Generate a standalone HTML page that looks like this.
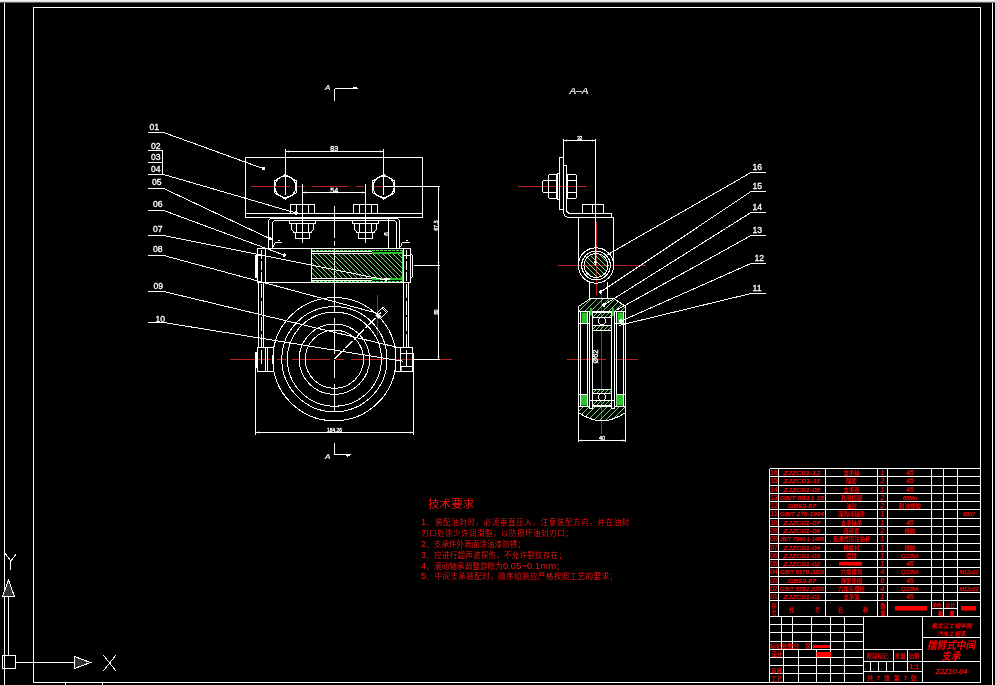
<!DOCTYPE html>
<html lang="zh"><head><meta charset="utf-8"><title>摆臂式中间支承</title>
<style>
html,body{margin:0;padding:0;background:#000;overflow:hidden}
svg{display:block;will-change:transform;font-family:"Liberation Sans","Noto Sans CJK SC",sans-serif}
.w,.wc{stroke:#fff;stroke-width:1;fill:none}
.w,.r,.wc,.rc,.gc{shape-rendering:crispEdges}
.r,.rc{stroke:#b92121;stroke-width:1;fill:none}
.g{stroke:#7cf07c;stroke-width:.9;fill:none}
.gc{stroke:#5fe05f;stroke-width:1;fill:none}
.gf{fill:#2cc42c;stroke:none}
.rf{fill:#f00;stroke:none}
.tw{fill:#fff;font-size:8px;stroke:#fff;stroke-width:.3px}
.twi{fill:#fff;font-style:italic;stroke:#fff;stroke-width:.2px}
.tr{fill:#f20c0c;stroke:#f00;stroke-width:.2px}
.tn{fill:#ff1212;font-weight:350}
.tri{fill:#f20c0c;font-style:italic;stroke:#f00;stroke-width:.25px}
.trb{fill:#f00;font-weight:bold}
.trbi{fill:#f00;font-weight:bold;font-style:italic}
</style></head><body>
<svg width="995" height="685" viewBox="0 0 995 685">
<rect x="0" y="0" width="995" height="685" style="fill:#000"/>
<line class="rc" x1="251" y1="186.5" x2="290" y2="186.5"/>
<line class="rc" x1="296" y1="186.5" x2="305" y2="186.5"/>
<line class="rc" x1="311.5" y1="186.5" x2="348" y2="186.5"/>
<line class="rc" x1="356" y1="186.5" x2="363.6" y2="186.5"/>
<line class="rc" x1="371" y1="186.5" x2="383" y2="186.5"/>
<line class="rc" x1="230" y1="359.5" x2="271" y2="359.5"/>
<line class="rc" x1="277" y1="359.5" x2="286.3" y2="359.5"/>
<line class="rc" x1="292" y1="359.5" x2="330" y2="359.5"/>
<line class="rc" x1="336" y1="359.5" x2="344" y2="359.5"/>
<line class="rc" x1="351.3" y1="359.5" x2="384" y2="359.5"/>
<line class="rc" x1="389" y1="359.5" x2="413" y2="359.5"/>
<line class="rc" x1="439" y1="359.5" x2="452" y2="359.5"/>
<line class="rc" x1="377.5" y1="294.5" x2="377.5" y2="334.5"/>
<line class="rc" x1="517.5" y1="186.5" x2="587" y2="186.5"/>
<line class="rc" x1="557.5" y1="265.5" x2="646" y2="265.5"/>
<line class="rc" x1="596.5" y1="221.5" x2="596.5" y2="295"/>
<line class="rc" x1="601.5" y1="292" x2="601.5" y2="434"/>
<line class="rc" x1="566.5" y1="359.5" x2="590.5" y2="359.5"/>
<line class="rc" x1="595" y1="359.5" x2="605.5" y2="359.5"/>
<line class="rc" x1="613.5" y1="359.5" x2="638" y2="359.5"/>
<rect x="0" y="0" width="995" height="1" fill="#f4f4f4"/>
<rect x="0" y="1" width="995" height="1" fill="#d8d8d8"/>
<rect x="0" y="2" width="995" height="1" fill="#666"/>
<line class="wc" x1="4.5" y1="3" x2="4.5" y2="685"/>
<line class="wc" x1="992.5" y1="3" x2="992.5" y2="685"/>
<rect class="wc" x="33.5" y="7.5" width="947" height="675"/>
<rect class="wc" x="2.5" y="655.5" width="13" height="13"/>
<line class="wc" x1="8.5" y1="597" x2="8.5" y2="655.5"/>
<line class="wc" x1="15.5" y1="662.5" x2="75" y2="662.5"/>
<polygon class="w" points="8.5,580 2.5,596.5 14.5,596.5" style="fill:#333"/>
<polygon class="w" points="90.5,662.5 74.5,656.5 74.5,668.5" style="fill:#333"/>
<line class="w" x1="5.3" y1="553.5" x2="10.8" y2="561"/>
<line class="w" x1="16.4" y1="553.5" x2="10.8" y2="561"/>
<line class="w" x1="10.8" y1="561" x2="10.8" y2="569.5"/>
<line class="w" x1="103.6" y1="655.4" x2="115.7" y2="670.6"/>
<line class="w" x1="115.7" y1="655.4" x2="103.6" y2="670.6"/>
<line class="wc" x1="65.5" y1="683" x2="65.5" y2="685"/>
<line class="wc" x1="102.5" y1="683" x2="102.5" y2="685"/>
<rect class="wc" x="245.5" y="157.5" width="177" height="60"/>
<line class="wc" x1="245.5" y1="213.5" x2="422.5" y2="213.5"/>
<polygon class="w" points="285.4,199.1 274.748,192.95 274.748,180.65 285.4,174.5 296.052,180.65 296.052,192.95"/>
<circle class="w" cx="285.4" cy="186.8" r="10.6"/>
<polygon class="w" points="383.6,199.1 372.948,192.95 372.948,180.65 383.6,174.5 394.252,180.65 394.252,192.95"/>
<circle class="w" cx="383.6" cy="186.8" r="10.6"/>
<line class="wc" x1="285.5" y1="151.5" x2="383.5" y2="151.5"/>
<line class="wc" x1="285.5" y1="149" x2="285.5" y2="195"/>
<line class="wc" x1="383.5" y1="149" x2="383.5" y2="195"/>
<text class="tw" x="334.2" y="150.8" style="font-size:7px" text-anchor="middle">83</text>
<line class="wc" x1="302.5" y1="192.5" x2="365.5" y2="192.5"/>
<line class="wc" x1="302.5" y1="184" x2="302.5" y2="242.5"/>
<line class="wc" x1="365.5" y1="184" x2="365.5" y2="242.5"/>
<text class="tw" x="334.2" y="192.6" style="font-size:7px" text-anchor="middle">54</text>
<rect class="wc" x="290.8" y="204.5" width="23.4" height="9"/>
<line class="wc" x1="296.5" y1="204.5" x2="296.5" y2="213.5"/>
<line class="wc" x1="308.5" y1="204.5" x2="308.5" y2="213.5"/>
<rect class="wc" x="289.5" y="220.5" width="26" height="3"/>
<path class="w" d="M291.5,223.5 V229.5 L294.0,232.5 H311.0 L313.5,229.5 V223.5"/>
<line class="wc" x1="296.5" y1="223.5" x2="296.5" y2="232.5"/>
<line class="wc" x1="308.5" y1="223.5" x2="308.5" y2="232.5"/>
<rect class="wc" x="295.5" y="232.5" width="14" height="6"/>
<rect class="wc" x="353.8" y="204.5" width="23.4" height="9"/>
<line class="wc" x1="359.5" y1="204.5" x2="359.5" y2="213.5"/>
<line class="wc" x1="371.5" y1="204.5" x2="371.5" y2="213.5"/>
<rect class="wc" x="352.5" y="220.5" width="26" height="3"/>
<path class="w" d="M354.5,223.5 V229.5 L357.0,232.5 H374.0 L376.5,229.5 V223.5"/>
<line class="wc" x1="359.5" y1="223.5" x2="359.5" y2="232.5"/>
<line class="wc" x1="371.5" y1="223.5" x2="371.5" y2="232.5"/>
<rect class="wc" x="358.5" y="232.5" width="14" height="6"/>
<path class="w" d="M268.5,247.5 V222 Q268.5,218.5 272,218.5 H396 Q399.5,218.5 399.5,222 V247.5"/>
<path class="w" d="M272.5,247.5 V224 Q272.5,220.5 276,220.5 H393 Q396.5,220.5 396.5,224 V247.5"/>
<line class="wc" x1="388.5" y1="219" x2="388.5" y2="247.5"/>
<text class="tw" x="386.5" y="236" style="font-size:6.5px" text-anchor="middle" transform="rotate(-90 386.5 234)">6</text>
<polyline class="w" points="273,247 275.5,242 281.5,242"/>
<polyline class="w" points="400.5,247 402.5,242 409.5,242"/>
<line class="wc" x1="277.5" y1="240.5" x2="280" y2="240.5"/>
<line class="wc" x1="405.5" y1="240.5" x2="408" y2="240.5"/>
<line class="wc" x1="334.5" y1="206" x2="334.5" y2="238"/>
<line class="wc" x1="334.5" y1="241" x2="334.5" y2="246"/>
<line class="wc" x1="334.5" y1="249" x2="334.5" y2="312"/>
<line class="wc" x1="334.5" y1="318" x2="334.5" y2="354"/>
<line class="wc" x1="334.5" y1="360" x2="334.5" y2="378"/>
<line class="wc" x1="334.5" y1="384" x2="334.5" y2="411.5"/>
<rect class="wc" x="257.5" y="248.5" width="153" height="34"/>
<path class="w" d="M257.5,254.5 Q255.5,254.5 255.5,257 V275 Q255.5,277.5 257.5,277.5"/>
<path class="w" d="M410.5,254.5 Q412.5,254.5 412.5,257 V275 Q412.5,277.5 410.5,277.5"/>
<line class="wc" x1="265.5" y1="248.5" x2="265.5" y2="282.5"/>
<line class="wc" x1="257.5" y1="255.5" x2="265.5" y2="255.5"/>
<line class="wc" x1="403.5" y1="248.5" x2="403.5" y2="282.5"/>
<line class="wc" x1="403.5" y1="255.5" x2="410.5" y2="255.5"/>
<line class="wc" x1="261.5" y1="250" x2="261.5" y2="281" stroke-dasharray="9 2"/>
<line class="wc" x1="406.5" y1="250" x2="406.5" y2="281" stroke-dasharray="9 2"/>
<clipPath id="hc"><rect x="312" y="253.5" width="90.5" height="24.5"/></clipPath>
<g clip-path="url(#hc)">
<line class="g" x1="287" y1="253" x2="313" y2="279"/>
<line class="g" x1="292" y1="253" x2="318" y2="279"/>
<line class="g" x1="297" y1="253" x2="323" y2="279"/>
<line class="g" x1="302" y1="253" x2="328" y2="279"/>
<line class="g" x1="307" y1="253" x2="333" y2="279"/>
<line class="g" x1="312" y1="253" x2="338" y2="279"/>
<line class="g" x1="317" y1="253" x2="343" y2="279"/>
<line class="g" x1="322" y1="253" x2="348" y2="279"/>
<line class="g" x1="327" y1="253" x2="353" y2="279"/>
<line class="g" x1="332" y1="253" x2="358" y2="279"/>
<line class="g" x1="337" y1="253" x2="363" y2="279"/>
<line class="g" x1="342" y1="253" x2="368" y2="279"/>
<line class="g" x1="347" y1="253" x2="373" y2="279"/>
<line class="g" x1="352" y1="253" x2="378" y2="279"/>
<line class="g" x1="357" y1="253" x2="383" y2="279"/>
<line class="g" x1="362" y1="253" x2="388" y2="279"/>
<line class="g" x1="367" y1="253" x2="393" y2="279"/>
<line class="g" x1="372" y1="253" x2="398" y2="279"/>
<line class="g" x1="377" y1="253" x2="403" y2="279"/>
<line class="g" x1="382" y1="253" x2="408" y2="279"/>
<line class="g" x1="387" y1="253" x2="413" y2="279"/>
<line class="g" x1="392" y1="253" x2="418" y2="279"/>
<line class="g" x1="397" y1="253" x2="423" y2="279"/>
<line class="g" x1="402" y1="253" x2="428" y2="279"/>
<line class="g" x1="407" y1="253" x2="433" y2="279"/>
<line class="g" x1="412" y1="253" x2="438" y2="279"/>
<line class="g" x1="417" y1="253" x2="443" y2="279"/>
</g>
<line class="gc" x1="312" y1="250.5" x2="402.5" y2="250.5" stroke-dasharray="2.5 1.5"/>
<line class="gc" x1="312" y1="281.5" x2="402.5" y2="281.5" stroke-dasharray="2.5 1.5"/>
<line class="wc" x1="312" y1="251.5" x2="372" y2="251.5"/>
<line class="wc" x1="312" y1="253.5" x2="372" y2="253.5"/>
<line class="wc" x1="312" y1="278.5" x2="372" y2="278.5"/>
<line class="wc" x1="312" y1="280.5" x2="372" y2="280.5"/>
<rect class="gf" x="372" y="252" width="30.5" height="2"/>
<rect class="gf" x="372" y="278" width="30.5" height="2"/>
<rect class="w" x="384" y="278" width="5.5" height="2" style="fill:#fff;stroke:none"/>
<line class="wc" x1="311.5" y1="248.5" x2="311.5" y2="282.5"/>
<line class="gc" x1="402.5" y1="251" x2="402.5" y2="281"/>
<line class="wc" x1="258.5" y1="282.5" x2="258.5" y2="347.5"/>
<line class="wc" x1="263.5" y1="282.5" x2="263.5" y2="347.5"/>
<line class="wc" x1="403.5" y1="282.5" x2="403.5" y2="347.5"/>
<line class="wc" x1="408.5" y1="282.5" x2="408.5" y2="347.5"/>
<line class="wc" x1="261.5" y1="284" x2="261.5" y2="366" stroke-dasharray="14 2.5"/>
<line class="wc" x1="406.5" y1="284" x2="406.5" y2="366" stroke-dasharray="14 2.5"/>
<rect class="wc" x="257.5" y="347.5" width="16" height="24"/>
<line class="wc" x1="265.5" y1="347.5" x2="265.5" y2="371.5"/>
<line class="wc" x1="267.5" y1="347.5" x2="267.5" y2="371.5"/>
<rect class="w" x="255.5" y="352" width="2" height="15" style="fill:#fff"/>
<rect class="w" x="255" y="255" width="2.5" height="22.5" style="fill:#fff;stroke:none"/>
<rect class="wc" x="395.5" y="347.5" width="17" height="24"/>
<line class="wc" x1="400.5" y1="347.5" x2="400.5" y2="371.5"/>
<line class="wc" x1="400.5" y1="353.5" x2="412.5" y2="353.5"/>
<line class="wc" x1="406.5" y1="353.5" x2="406.5" y2="366.5"/>
<line class="wc" x1="400.5" y1="366.5" x2="412.5" y2="366.5"/>
<line class="gc" x1="401.5" y1="366.5" x2="401.5" y2="371"/>
<circle class="w" cx="334.4" cy="359.2" r="61.6"/>
<circle class="w" cx="334.4" cy="359.2" r="52.6"/>
<circle class="w" cx="334.4" cy="359.2" r="47"/>
<circle class="w" cx="334.4" cy="359.2" r="35.2"/>
<circle class="w" cx="334.4" cy="359.2" r="29.1"/>
<line class="w" x1="334.4" y1="359.2" x2="381" y2="312.6" stroke-dasharray="10 2 2 2"/>
<g transform="translate(382 312.3) rotate(-45)"><rect class="w" x="-4.2" y="-3.3" width="8.4" height="6.6"/><line class="w" x1="2.6" y1="-3.3" x2="2.6" y2="3.3"/><rect x="-7" y="-2.6" width="3.6" height="5.2" style="fill:#fff"/></g>
<line class="wc" x1="255.5" y1="432.5" x2="413.5" y2="432.5"/>
<line class="wc" x1="255.5" y1="367" x2="255.5" y2="435"/>
<line class="wc" x1="413.5" y1="353" x2="413.5" y2="435"/>
<text class="tw" x="334.5" y="432" style="font-size:5.5px" text-anchor="middle" textLength="15" lengthAdjust="spacingAndGlyphs">184.26</text>
<line class="wc" x1="438.5" y1="186.5" x2="438.5" y2="359.5"/>
<line class="wc" x1="383.5" y1="186.5" x2="440" y2="186.5"/>
<line class="wc" x1="413.5" y1="265.5" x2="440" y2="265.5"/>
<line class="wc" x1="412.5" y1="359.5" x2="439.5" y2="359.5"/>
<text class="tw" x="438" y="226" style="font-size:5.2px" text-anchor="middle" transform="rotate(-90 437.5 226)">67.5</text>
<text class="tw" x="438" y="312.5" style="font-size:4.6px" text-anchor="middle" transform="rotate(-90 437.5 312.5)">80</text>
<line class="wc" x1="334.5" y1="88.5" x2="334.5" y2="101"/>
<line class="wc" x1="334.5" y1="88.5" x2="358" y2="88.5"/>
<polyline class="w" points="352,88.5 355,87 358,88.5"/>
<text class="twi" x="325" y="90.3" style="font-size:8px">A</text>
<line class="wc" x1="334.5" y1="443" x2="334.5" y2="454.5"/>
<line class="wc" x1="334.5" y1="454.5" x2="350.5" y2="454.5"/>
<polyline class="w" points="345,454.5 347.5,456 350.5,454.5"/>
<text class="twi" x="325" y="459.3" style="font-size:8px">A</text>
<text class="tw" x="149.4" y="129.6" style="font-size:8.6px">01</text>
<line class="wc" x1="148" y1="132.5" x2="163.7" y2="132.5"/>
<line class="w" x1="163.7" y1="132.5" x2="263.8" y2="168.8"/>
<circle class="w" cx="263.8" cy="168.8" r="1.3" style="fill:#fff"/>
<text class="tw" x="151" y="148.6" style="font-size:8.6px">02</text>
<line class="wc" x1="148" y1="150.5" x2="162.5" y2="150.5"/>
<text class="tw" x="151" y="160.2" style="font-size:8.6px">03</text>
<line class="wc" x1="148" y1="162.5" x2="162.5" y2="162.5"/>
<text class="tw" x="151" y="171.9" style="font-size:8.6px">04</text>
<line class="wc" x1="147.5" y1="174.5" x2="163.7" y2="174.5"/>
<line class="w" x1="163.7" y1="174.5" x2="296" y2="213"/>
<circle class="w" cx="296" cy="213" r="1.3" style="fill:#fff"/>
<text class="tw" x="152" y="184.8" style="font-size:8.6px">05</text>
<line class="wc" x1="148" y1="188.5" x2="163.7" y2="188.5"/>
<line class="w" x1="163.7" y1="188.5" x2="270" y2="238.7"/>
<circle class="w" cx="270" cy="238.7" r="1.3" style="fill:#fff"/>
<text class="tw" x="153" y="206.6" style="font-size:8.6px">06</text>
<line class="wc" x1="148" y1="210.5" x2="163.7" y2="210.5"/>
<line class="w" x1="163.7" y1="210.5" x2="284.2" y2="255.1"/>
<circle class="w" cx="284.2" cy="255.1" r="1.3" style="fill:#fff"/>
<text class="tw" x="152.9" y="232.2" style="font-size:8.6px">07</text>
<line class="wc" x1="148" y1="235.5" x2="163.7" y2="235.5"/>
<line class="w" x1="163.7" y1="235.5" x2="387" y2="280.3"/>
<text class="tw" x="152.9" y="251.7" style="font-size:8.6px">08</text>
<line class="wc" x1="148" y1="255.5" x2="163.7" y2="255.5"/>
<line class="w" x1="163.7" y1="255.5" x2="377" y2="313.2"/>
<text class="tw" x="153.5" y="289.2" style="font-size:8.6px">09</text>
<line class="wc" x1="148" y1="291.5" x2="163.7" y2="291.5"/>
<line class="w" x1="163.7" y1="291.5" x2="400" y2="348"/>
<text class="tw" x="155.5" y="322.2" style="font-size:8.6px">10</text>
<line class="wc" x1="148" y1="322.5" x2="163.7" y2="322.5"/>
<line class="w" x1="163.7" y1="322.5" x2="403.4" y2="361.3"/>
<line class="wc" x1="162.5" y1="150.5" x2="162.5" y2="174.5"/>
<text class="twi" x="569.5" y="94.3" style="font-size:9.6px" textLength="18.8" lengthAdjust="spacingAndGlyphs">A–A</text>
<line class="wc" x1="563.5" y1="140.5" x2="595.5" y2="140.5"/>
<line class="wc" x1="563.5" y1="138.5" x2="563.5" y2="165"/>
<line class="wc" x1="595.5" y1="138.5" x2="595.5" y2="265"/>
<text class="tw" x="579.7" y="140" style="font-size:4.5px" text-anchor="middle">32</text>
<circle class="w" cx="595.5" cy="262" r="1.3" style="fill:#fff"/>
<path class="w" d="M559.5,173.5 V157.5 H563.5 M559.5,199.5 V209.5 H563.5"/>
<path class="w" d="M563.5,165 V211 Q563.5,217.5 570,217.5 H613.5"/>
<path class="w" d="M563.5,165.5 H566.5 V209 Q566.5,213.5 571,213.5 H611.5 V217.5"/>
<path class="w" d="M548.5,180 H545 Q542.5,180 542.5,182.5 V190 Q542.5,192.5 545,192.5 H548.5"/>
<path class="w" d="M550.5,174.5 H556.5 V198.5 H550.5 Q548.5,198.5 548.5,196.5 V176.5 Q548.5,174.5 550.5,174.5 Z"/>
<line class="wc" x1="548.5" y1="180.5" x2="556.5" y2="180.5"/>
<line class="wc" x1="548.5" y1="192.5" x2="556.5" y2="192.5"/>
<rect class="wc" x="557.5" y="173.5" width="2" height="26"/>
<path class="w" d="M567.5,174.5 H574.5 Q576.5,174.5 576.5,176.5 V196.5 Q576.5,198.5 574.5,198.5 H567.5 Z"/>
<line class="wc" x1="567.5" y1="180.5" x2="576.5" y2="180.5"/>
<line class="wc" x1="567.5" y1="192.5" x2="576.5" y2="192.5"/>
<rect class="wc" x="582.5" y="204.5" width="21" height="9"/>
<line class="wc" x1="592.5" y1="204.5" x2="592.5" y2="213.5"/>
<line class="wc" x1="578.5" y1="217.5" x2="578.5" y2="265.5"/>
<line class="wc" x1="613.5" y1="217.5" x2="613.5" y2="265.5"/>
<circle class="w" cx="596" cy="265.5" r="17.7"/>
<circle class="w" cx="596" cy="265.5" r="14.3"/>
<circle class="w" cx="596" cy="265.5" r="12"/>
<clipPath id="hc2"><circle cx="596" cy="265.5" r="11.5"/></clipPath><g clip-path="url(#hc2)">
<line class="g" x1="560" y1="250" x2="592" y2="282"/>
<line class="g" x1="565" y1="250" x2="597" y2="282"/>
<line class="g" x1="570" y1="250" x2="602" y2="282"/>
<line class="g" x1="575" y1="250" x2="607" y2="282"/>
<line class="g" x1="580" y1="250" x2="612" y2="282"/>
<line class="g" x1="585" y1="250" x2="617" y2="282"/>
<line class="g" x1="590" y1="250" x2="622" y2="282"/>
<line class="g" x1="595" y1="250" x2="627" y2="282"/>
<line class="g" x1="600" y1="250" x2="632" y2="282"/>
<line class="g" x1="605" y1="250" x2="637" y2="282"/>
<line class="g" x1="610" y1="250" x2="642" y2="282"/>
<line class="g" x1="615" y1="250" x2="647" y2="282"/>
</g>
<path class="w" d="M589.5,281.5 V298.5 M607.5,281.5 V298.5"/>
<clipPath id="hc3"><polygon points="590.5,298.5 614,298.5 625.5,306.5 625.5,311.5 578.5,311.5 578.5,306.5"/></clipPath><g clip-path="url(#hc3)">
<line class="g" x1="560" y1="312" x2="574" y2="298"/>
<line class="g" x1="566" y1="312" x2="580" y2="298"/>
<line class="g" x1="572" y1="312" x2="586" y2="298"/>
<line class="g" x1="578" y1="312" x2="592" y2="298"/>
<line class="g" x1="584" y1="312" x2="598" y2="298"/>
<line class="g" x1="590" y1="312" x2="604" y2="298"/>
<line class="g" x1="596" y1="312" x2="610" y2="298"/>
<line class="g" x1="602" y1="312" x2="616" y2="298"/>
<line class="g" x1="608" y1="312" x2="622" y2="298"/>
<line class="g" x1="614" y1="312" x2="628" y2="298"/>
<line class="g" x1="620" y1="312" x2="634" y2="298"/>
<line class="g" x1="626" y1="312" x2="640" y2="298"/>
<line class="g" x1="632" y1="312" x2="646" y2="298"/>
<line class="g" x1="638" y1="312" x2="652" y2="298"/>
</g>
<polyline class="w" points="578.5,441.5 578.5,306.5 590.5,298.5 614,298.5 625.5,306.5 625.5,441.5"/>
<line class="wc" x1="578.5" y1="311.5" x2="625.5" y2="311.5"/>
<line class="wc" x1="580.5" y1="311.5" x2="580.5" y2="406"/>
<line class="wc" x1="587.5" y1="311.5" x2="587.5" y2="406"/>
<line class="wc" x1="589.5" y1="311.5" x2="589.5" y2="406"/>
<line class="wc" x1="592.5" y1="311.5" x2="592.5" y2="406"/>
<line class="wc" x1="611.5" y1="311.5" x2="611.5" y2="406"/>
<line class="wc" x1="614.5" y1="311.5" x2="614.5" y2="406"/>
<line class="wc" x1="616.5" y1="311.5" x2="616.5" y2="406"/>
<line class="wc" x1="623.5" y1="311.5" x2="623.5" y2="406"/>
<rect class="gf" x="581.5" y="312.5" width="5.5" height="11"/>
<rect class="gf" x="617.5" y="312.5" width="5.5" height="11"/>
<rect class="gf" x="590" y="308" width="2" height="7.5"/>
<rect class="gf" x="612" y="308" width="2" height="8"/>
<rect class="wc" x="592.5" y="312.5" width="19" height="17.5"/>
<clipPath id="hc4"><rect x="592.5" y="312.5" width="19" height="17.5"/></clipPath><g clip-path="url(#hc4)">
<line class="g" x1="580" y1="330" x2="598" y2="312"/>
<line class="g" x1="584" y1="330" x2="602" y2="312"/>
<line class="g" x1="588" y1="330" x2="606" y2="312"/>
<line class="g" x1="592" y1="330" x2="610" y2="312"/>
<line class="g" x1="596" y1="330" x2="614" y2="312"/>
<line class="g" x1="600" y1="330" x2="618" y2="312"/>
<line class="g" x1="604" y1="330" x2="622" y2="312"/>
<line class="g" x1="608" y1="330" x2="626" y2="312"/>
<line class="g" x1="612" y1="330" x2="630" y2="312"/>
<line class="g" x1="616" y1="330" x2="634" y2="312"/>
</g>
<rect class="w" x="592.5" y="317.5" width="19" height="7.5" style="fill:#000"/>
<circle class="w" cx="602" cy="321.2" r="3.7" style="fill:#000"/>
<line class="wc" x1="614.5" y1="323.5" x2="625.5" y2="323.5"/>
<line class="wc" x1="578.5" y1="323.5" x2="589.5" y2="323.5"/>
<rect class="wc" x="592.5" y="389" width="19" height="16.5"/>
<clipPath id="hc5"><rect x="592.5" y="389" width="19" height="16.5"/></clipPath><g clip-path="url(#hc5)">
<line class="g" x1="580" y1="406" x2="598" y2="388"/>
<line class="g" x1="584" y1="406" x2="602" y2="388"/>
<line class="g" x1="588" y1="406" x2="606" y2="388"/>
<line class="g" x1="592" y1="406" x2="610" y2="388"/>
<line class="g" x1="596" y1="406" x2="614" y2="388"/>
<line class="g" x1="600" y1="406" x2="618" y2="388"/>
<line class="g" x1="604" y1="406" x2="622" y2="388"/>
<line class="g" x1="608" y1="406" x2="626" y2="388"/>
<line class="g" x1="612" y1="406" x2="630" y2="388"/>
<line class="g" x1="616" y1="406" x2="634" y2="388"/>
</g>
<rect class="w" x="592.5" y="393.5" width="19" height="7" style="fill:#000"/>
<circle class="w" cx="602" cy="397" r="3.5" style="fill:#000"/>
<rect class="gf" x="581" y="394.5" width="6" height="11"/>
<rect class="gf" x="616.5" y="394.5" width="6.5" height="11"/>
<line class="wc" x1="578.5" y1="394.5" x2="587.5" y2="394.5"/>
<line class="wc" x1="616.5" y1="394.5" x2="625.5" y2="394.5"/>
<clipPath id="hc6"><path d="M578.5,406 H625.5 V412.5 Q602,429 578.5,412.5 Z"/></clipPath><g clip-path="url(#hc6)">
<line class="g" x1="560" y1="424" x2="578" y2="406"/>
<line class="g" x1="566" y1="424" x2="584" y2="406"/>
<line class="g" x1="572" y1="424" x2="590" y2="406"/>
<line class="g" x1="578" y1="424" x2="596" y2="406"/>
<line class="g" x1="584" y1="424" x2="602" y2="406"/>
<line class="g" x1="590" y1="424" x2="608" y2="406"/>
<line class="g" x1="596" y1="424" x2="614" y2="406"/>
<line class="g" x1="602" y1="424" x2="620" y2="406"/>
<line class="g" x1="608" y1="424" x2="626" y2="406"/>
<line class="g" x1="614" y1="424" x2="632" y2="406"/>
<line class="g" x1="620" y1="424" x2="638" y2="406"/>
<line class="g" x1="626" y1="424" x2="644" y2="406"/>
<line class="g" x1="632" y1="424" x2="650" y2="406"/>
<line class="g" x1="638" y1="424" x2="656" y2="406"/>
</g>
<path class="w" d="M578.5,406 H625.5 M578.5,412.5 Q602,429 625.5,412.5"/>
<rect class="w" x="589.5" y="400" width="2.5" height="8" style="fill:#000"/>
<rect class="w" x="611.5" y="400" width="2.5" height="8" style="fill:#000"/>
<text class="tw" x="599.5" y="358" style="font-size:7.4px" text-anchor="middle" transform="rotate(-90 598 358)">Ø62</text>
<line class="wc" x1="578.5" y1="440.5" x2="625.5" y2="440.5"/>
<text class="tw" x="602" y="439.8" style="font-size:5.6px" text-anchor="middle">40</text>
<text class="tw" x="752.5" y="170.1" style="font-size:8.6px">16</text>
<line class="wc" x1="751" y1="172.5" x2="766" y2="172.5"/>
<line class="w" x1="751" y1="172.5" x2="604.3" y2="256.5"/>
<text class="tw" x="752.5" y="189.1" style="font-size:8.6px">15</text>
<line class="wc" x1="751" y1="191.5" x2="766" y2="191.5"/>
<line class="w" x1="751" y1="191.5" x2="600.6" y2="292"/>
<circle class="w" cx="600.6" cy="292" r="1.3" style="fill:#fff"/>
<text class="tw" x="752.5" y="210.1" style="font-size:8.6px">14</text>
<line class="wc" x1="751" y1="212.5" x2="766" y2="212.5"/>
<line class="w" x1="751" y1="212.5" x2="603.8" y2="305"/>
<circle class="w" cx="603.8" cy="305" r="1.3" style="fill:#fff"/>
<text class="tw" x="752.5" y="233.1" style="font-size:8.6px">13</text>
<line class="wc" x1="751" y1="235.5" x2="766" y2="235.5"/>
<line class="w" x1="751" y1="235.5" x2="616.6" y2="310.1"/>
<text class="tw" x="754.5" y="261.1" style="font-size:8.6px">12</text>
<line class="wc" x1="751" y1="263.5" x2="766" y2="263.5"/>
<line class="w" x1="751" y1="263.5" x2="621" y2="321.1"/>
<circle class="w" cx="621" cy="321.1" r="1.3" style="fill:#fff"/>
<text class="tw" x="752.5" y="291.1" style="font-size:8.6px">11</text>
<line class="wc" x1="751" y1="293.5" x2="766" y2="293.5"/>
<line class="w" x1="751" y1="293.5" x2="618.8" y2="325.5"/>
<text class="tn" x="428" y="508" style="font-size:11.6px" font-weight="400">技术要求</text>
<text class="tn" x="421" y="525.3" style="font-size:7.6px" textLength="208.4" lengthAdjust="spacing"><tspan style="font-size:9.4px">1</tspan>、装配油封时，必须垂直压入，注意装配方向，并在油封</text>
<text class="tn" x="421" y="536.12" style="font-size:7.6px" textLength="151.5" lengthAdjust="spacing">刃口处涂少许润滑脂，以防损坏油封刃口；</text>
<text class="tn" x="421" y="546.94" style="font-size:7.6px" textLength="104" lengthAdjust="spacing"><tspan style="font-size:9.4px">2</tspan>、支承件外表面涂油漆防锈；</text>
<text class="tn" x="421" y="557.76" style="font-size:7.6px" textLength="145" lengthAdjust="spacing"><tspan style="font-size:9.4px">3</tspan>、应进行超声波探伤，不允许裂纹存在；</text>
<text class="tn" x="421" y="568.58" style="font-size:7.6px" textLength="142.6" lengthAdjust="spacing"><tspan style="font-size:9.4px">4</tspan>、滚动轴承调整游隙为<tspan style="font-size:9.4px">0.05~0.1mm</tspan>；</text>
<text class="tn" x="421" y="579.4" style="font-size:7.6px" textLength="196" lengthAdjust="spacing"><tspan style="font-size:9.4px">5</tspan>、中间支承装配时，顺序组装应严格按照工艺的要求；</text>
<line class="wc" x1="769.5" y1="468.5" x2="980.5" y2="468.5"/>
<line class="wc" x1="769.5" y1="476.5" x2="980.5" y2="476.5"/>
<line class="wc" x1="769.5" y1="485.5" x2="980.5" y2="485.5"/>
<line class="wc" x1="769.5" y1="493.5" x2="980.5" y2="493.5"/>
<line class="wc" x1="769.5" y1="501.5" x2="980.5" y2="501.5"/>
<line class="wc" x1="769.5" y1="509.5" x2="980.5" y2="509.5"/>
<line class="wc" x1="769.5" y1="518.5" x2="980.5" y2="518.5"/>
<line class="wc" x1="769.5" y1="526.5" x2="980.5" y2="526.5"/>
<line class="wc" x1="769.5" y1="534.5" x2="980.5" y2="534.5"/>
<line class="wc" x1="769.5" y1="543.5" x2="980.5" y2="543.5"/>
<line class="wc" x1="769.5" y1="551.5" x2="980.5" y2="551.5"/>
<line class="wc" x1="769.5" y1="559.5" x2="980.5" y2="559.5"/>
<line class="wc" x1="769.5" y1="567.5" x2="980.5" y2="567.5"/>
<line class="wc" x1="769.5" y1="576.5" x2="980.5" y2="576.5"/>
<line class="wc" x1="769.5" y1="584.5" x2="980.5" y2="584.5"/>
<line class="wc" x1="769.5" y1="592.5" x2="980.5" y2="592.5"/>
<line class="wc" x1="769.5" y1="600.5" x2="980.5" y2="600.5"/>
<line class="wc" x1="769.5" y1="616.5" x2="980.5" y2="616.5"/>
<line class="wc" x1="769.5" y1="468.5" x2="769.5" y2="616.5"/>
<line class="wc" x1="778.5" y1="468.5" x2="778.5" y2="616.5"/>
<line class="wc" x1="825.5" y1="468.5" x2="825.5" y2="616.5"/>
<line class="wc" x1="877.5" y1="468.5" x2="877.5" y2="616.5"/>
<line class="wc" x1="887.5" y1="468.5" x2="887.5" y2="616.5"/>
<line class="wc" x1="931.5" y1="468.5" x2="931.5" y2="616.5"/>
<line class="wc" x1="943.5" y1="468.5" x2="943.5" y2="616.5"/>
<line class="wc" x1="957.5" y1="468.5" x2="957.5" y2="616.5"/>
<line class="wc" x1="980.5" y1="468.5" x2="980.5" y2="616.5"/>
<line class="wc" x1="931.5" y1="608.5" x2="957.5" y2="608.5"/>
<text class="tr" x="770.3" y="475.1" style="font-size:6.4px" textLength="7.4" lengthAdjust="spacingAndGlyphs">16</text>
<text class="tri" x="802" y="475.1" style="font-size:5.6px" text-anchor="middle" textLength="36.9" lengthAdjust="spacingAndGlyphs">ZJZC01-12</text>
<text class="trb" x="851.5" y="475.4" style="font-size:5.4px" text-anchor="middle">支承轴</text>
<text class="tri" x="882.3" y="475.3" style="font-size:6.8px" text-anchor="middle">1</text>
<text class="tri" x="910" y="475.3" style="font-size:6.8px" text-anchor="middle">45</text>
<text class="tr" x="770.3" y="483.1" style="font-size:6.4px" textLength="7.4" lengthAdjust="spacingAndGlyphs">15</text>
<text class="tri" x="802" y="483.1" style="font-size:5.6px" text-anchor="middle" textLength="36.9" lengthAdjust="spacingAndGlyphs">ZJZC01-11</text>
<text class="trb" x="851.5" y="483.4" style="font-size:5.4px" text-anchor="middle">隔套</text>
<text class="tri" x="882.3" y="483.3" style="font-size:6.8px" text-anchor="middle">2</text>
<text class="tri" x="910" y="483.3" style="font-size:6.8px" text-anchor="middle">45</text>
<text class="tr" x="770.3" y="492.1" style="font-size:6.4px" textLength="7.4" lengthAdjust="spacingAndGlyphs">14</text>
<text class="tri" x="802" y="492.1" style="font-size:5.6px" text-anchor="middle" textLength="36.9" lengthAdjust="spacingAndGlyphs">ZJZC01-08</text>
<text class="trb" x="851.5" y="492.4" style="font-size:5.4px" text-anchor="middle">支承座</text>
<text class="tri" x="882.3" y="492.3" style="font-size:6.8px" text-anchor="middle">1</text>
<text class="tri" x="910" y="492.3" style="font-size:6.8px" text-anchor="middle">45</text>
<text class="tr" x="770.3" y="500.1" style="font-size:6.4px" textLength="7.4" lengthAdjust="spacingAndGlyphs">13</text>
<text class="tri" x="802" y="500.1" style="font-size:5.6px" text-anchor="middle" textLength="44" lengthAdjust="spacingAndGlyphs">GB/T 893.1 35</text>
<text class="trb" x="851.5" y="500.4" style="font-size:5.4px" text-anchor="middle">孔用挡圈</text>
<text class="tri" x="882.3" y="500.3" style="font-size:6.8px" text-anchor="middle">2</text>
<text class="tri" x="910" y="500.1" style="font-size:5.6px" text-anchor="middle">65Mn</text>
<text class="tr" x="770.3" y="508.1" style="font-size:6.4px" textLength="7.4" lengthAdjust="spacingAndGlyphs">12</text>
<text class="tri" x="802" y="508.1" style="font-size:5.6px" text-anchor="middle" textLength="28.7" lengthAdjust="spacingAndGlyphs">GB93-87</text>
<text class="trb" x="851.5" y="508.4" style="font-size:5.4px" text-anchor="middle">油封</text>
<text class="tri" x="882.3" y="508.3" style="font-size:6.8px" text-anchor="middle">2</text>
<text class="trb" x="910" y="508.1" style="font-size:5.6px" text-anchor="middle">耐油橡胶</text>
<text class="tr" x="770.3" y="516.1" style="font-size:6.4px" textLength="7.4" lengthAdjust="spacingAndGlyphs">11</text>
<text class="tri" x="802" y="516.1" style="font-size:5.6px" text-anchor="middle" textLength="44" lengthAdjust="spacingAndGlyphs">GB/T 276-1994</text>
<text class="trb" x="851.5" y="516.4" style="font-size:5.4px" text-anchor="middle">深沟球轴承</text>
<text class="tri" x="882.3" y="516.3" style="font-size:6.8px" text-anchor="middle">1</text>
<text class="tri" x="969" y="516.1" style="font-size:5.4px" text-anchor="middle">6007</text>
<text class="tr" x="770.3" y="525.1" style="font-size:6.4px" textLength="7.4" lengthAdjust="spacingAndGlyphs">10</text>
<text class="tri" x="802" y="525.1" style="font-size:5.6px" text-anchor="middle" textLength="36.9" lengthAdjust="spacingAndGlyphs">ZJZC01-07</text>
<text class="trb" x="851.5" y="525.4" style="font-size:5.4px" text-anchor="middle">支承轴承</text>
<text class="tri" x="882.3" y="525.3" style="font-size:6.8px" text-anchor="middle">1</text>
<text class="tri" x="910" y="525.3" style="font-size:6.8px" text-anchor="middle">45</text>
<text class="tr" x="770.3" y="533.1" style="font-size:6.4px" textLength="7.4" lengthAdjust="spacingAndGlyphs">09</text>
<text class="tri" x="802" y="533.1" style="font-size:5.6px" text-anchor="middle" textLength="36.9" lengthAdjust="spacingAndGlyphs">ZJZC01-06</text>
<text class="trb" x="851.5" y="533.4" style="font-size:5.4px" text-anchor="middle">连接套</text>
<text class="tri" x="882.3" y="533.3" style="font-size:6.8px" text-anchor="middle">2</text>
<text class="trb" x="910" y="533.1" style="font-size:5.6px" text-anchor="middle">橡胶</text>
<text class="tr" x="770.3" y="541.1" style="font-size:6.4px" textLength="7.4" lengthAdjust="spacingAndGlyphs">08</text>
<text class="tri" x="802" y="541.1" style="font-size:5.6px" text-anchor="middle" textLength="44" lengthAdjust="spacingAndGlyphs">JB/T 7940.1-1995</text>
<text class="trb" x="851.5" y="541.4" style="font-size:5.4px" text-anchor="middle">直通式压注油杯</text>
<text class="tri" x="882.3" y="541.3" style="font-size:6.8px" text-anchor="middle">1</text>
<text class="tr" x="770.3" y="550.1" style="font-size:6.4px" textLength="7.4" lengthAdjust="spacingAndGlyphs">07</text>
<text class="tri" x="802" y="550.1" style="font-size:5.6px" text-anchor="middle" textLength="36.9" lengthAdjust="spacingAndGlyphs">ZJZC01-04</text>
<text class="trb" x="851.5" y="550.4" style="font-size:5.4px" text-anchor="middle">橡胶衬</text>
<text class="tri" x="882.3" y="550.3" style="font-size:6.8px" text-anchor="middle">1</text>
<text class="trb" x="910" y="550.1" style="font-size:5.6px" text-anchor="middle">橡胶</text>
<text class="tr" x="770.3" y="558.1" style="font-size:6.4px" textLength="7.4" lengthAdjust="spacingAndGlyphs">06</text>
<text class="tri" x="802" y="558.1" style="font-size:5.6px" text-anchor="middle" textLength="36.9" lengthAdjust="spacingAndGlyphs">ZJZC01-03</text>
<text class="trb" x="851.5" y="558.4" style="font-size:5.4px" text-anchor="middle">摆臂</text>
<text class="tri" x="882.3" y="558.3" style="font-size:6.8px" text-anchor="middle">1</text>
<text class="tri" x="910" y="558.1" style="font-size:5.6px" text-anchor="middle">Q235A</text>
<text class="tr" x="770.3" y="566.1" style="font-size:6.4px" textLength="7.4" lengthAdjust="spacingAndGlyphs">05</text>
<text class="tri" x="802" y="566.1" style="font-size:5.6px" text-anchor="middle" textLength="36.9" lengthAdjust="spacingAndGlyphs">ZJZC01-02</text>
<rect class="rf" x="839" y="561.8" width="23" height="3.7"/>
<text class="tri" x="882.3" y="566.3" style="font-size:6.8px" text-anchor="middle">1</text>
<text class="tri" x="910" y="566.3" style="font-size:6.8px" text-anchor="middle">45</text>
<text class="tr" x="770.3" y="574.1" style="font-size:6.4px" textLength="7.4" lengthAdjust="spacingAndGlyphs">04</text>
<text class="tri" x="802" y="574.1" style="font-size:5.6px" text-anchor="middle" textLength="44" lengthAdjust="spacingAndGlyphs">GB/T 6170 2000</text>
<text class="trb" x="851.5" y="574.4" style="font-size:5.4px" text-anchor="middle">六角螺母</text>
<text class="tri" x="882.3" y="574.3" style="font-size:6.8px" text-anchor="middle">4</text>
<text class="tri" x="910" y="574.1" style="font-size:5.6px" text-anchor="middle">Q235A</text>
<text class="tri" x="969" y="574.1" style="font-size:5.4px" text-anchor="middle">M12x22</text>
<text class="tr" x="770.3" y="583.1" style="font-size:6.4px" textLength="7.4" lengthAdjust="spacingAndGlyphs">03</text>
<text class="tri" x="802" y="583.1" style="font-size:5.6px" text-anchor="middle" textLength="28.7" lengthAdjust="spacingAndGlyphs">GB93-87</text>
<text class="trb" x="851.5" y="583.4" style="font-size:5.4px" text-anchor="middle">弹簧垫圈</text>
<text class="tri" x="882.3" y="583.3" style="font-size:6.8px" text-anchor="middle">8</text>
<text class="tri" x="910" y="583.3" style="font-size:6.8px" text-anchor="middle">45</text>
<text class="tr" x="770.3" y="591.1" style="font-size:6.4px" textLength="7.4" lengthAdjust="spacingAndGlyphs">02</text>
<text class="tri" x="802" y="591.1" style="font-size:5.6px" text-anchor="middle" textLength="44" lengthAdjust="spacingAndGlyphs">GB/T 5782 2000</text>
<text class="trb" x="851.5" y="591.4" style="font-size:5.4px" text-anchor="middle">六角头螺栓</text>
<text class="tri" x="882.3" y="591.3" style="font-size:6.8px" text-anchor="middle">4</text>
<text class="tri" x="910" y="591.1" style="font-size:5.6px" text-anchor="middle">Q235A</text>
<text class="tri" x="969" y="591.1" style="font-size:5.4px" text-anchor="middle">M12x22</text>
<text class="tr" x="770.3" y="599.1" style="font-size:6.4px" textLength="7.4" lengthAdjust="spacingAndGlyphs">01</text>
<text class="tri" x="802" y="599.1" style="font-size:5.6px" text-anchor="middle" textLength="36.9" lengthAdjust="spacingAndGlyphs">ZJZC01-01</text>
<text class="trb" x="851.5" y="599.4" style="font-size:5.4px" text-anchor="middle">支承架</text>
<text class="tri" x="882.3" y="599.3" style="font-size:6.8px" text-anchor="middle">1</text>
<text class="tri" x="910" y="599.3" style="font-size:6.8px" text-anchor="middle">45</text>
<text class="tr" x="771.5" y="607.5" style="font-size:5.2px">序</text>
<text class="tr" x="771.5" y="614.8" style="font-size:5.2px">号</text>
<text class="tr" x="789" y="612" style="font-size:5.2px">代</text>
<text class="tr" x="815" y="612" style="font-size:5.2px">号</text>
<text class="tr" x="838" y="612" style="font-size:5.2px">名</text>
<text class="tr" x="863" y="612" style="font-size:5.2px">称</text>
<text class="tr" x="880.5" y="607.5" style="font-size:5.2px">数</text>
<text class="tr" x="880.5" y="614.8" style="font-size:5.2px">量</text>
<rect class="rf" x="895" y="606" width="32" height="4.5"/>
<rect class="rf" x="961" y="606" width="15" height="4.5"/>
<text class="tr" x="932.3" y="606.6" style="font-size:4.8px">单件</text>
<text class="tr" x="945.6" y="606.6" style="font-size:4.8px">总计</text>
<text class="tr" x="938" y="614.8" style="font-size:5px">重</text>
<text class="tr" x="949.5" y="614.8" style="font-size:5px">量</text>
<line class="wc" x1="769.5" y1="624.5" x2="863.5" y2="624.5"/>
<line class="wc" x1="769.5" y1="632.5" x2="863.5" y2="632.5"/>
<line class="wc" x1="769.5" y1="641.5" x2="863.5" y2="641.5"/>
<line class="wc" x1="769.5" y1="649.5" x2="863.5" y2="649.5"/>
<line class="wc" x1="769.5" y1="657.5" x2="863.5" y2="657.5"/>
<line class="wc" x1="769.5" y1="665.5" x2="863.5" y2="665.5"/>
<line class="wc" x1="769.5" y1="673.5" x2="863.5" y2="673.5"/>
<line class="wc" x1="769.5" y1="616.5" x2="769.5" y2="649.5"/>
<line class="wc" x1="781.5" y1="616.5" x2="781.5" y2="649.5"/>
<line class="wc" x1="792.5" y1="616.5" x2="792.5" y2="649.5"/>
<line class="wc" x1="811.5" y1="616.5" x2="811.5" y2="649.5"/>
<line class="wc" x1="830.5" y1="616.5" x2="830.5" y2="649.5"/>
<line class="wc" x1="844.5" y1="616.5" x2="844.5" y2="649.5"/>
<line class="wc" x1="863.5" y1="616.5" x2="863.5" y2="649.5"/>
<line class="wc" x1="769.5" y1="649.5" x2="769.5" y2="682.5"/>
<line class="wc" x1="783.5" y1="649.5" x2="783.5" y2="682.5"/>
<line class="wc" x1="798.5" y1="649.5" x2="798.5" y2="682.5"/>
<line class="wc" x1="816.5" y1="649.5" x2="816.5" y2="682.5"/>
<line class="wc" x1="830.5" y1="649.5" x2="830.5" y2="682.5"/>
<line class="wc" x1="844.5" y1="649.5" x2="844.5" y2="682.5"/>
<line class="wc" x1="863.5" y1="649.5" x2="863.5" y2="682.5"/>
<line class="wc" x1="922.5" y1="616.5" x2="922.5" y2="682.5"/>
<line class="wc" x1="863.5" y1="649.5" x2="922.5" y2="649.5"/>
<line class="wc" x1="863.5" y1="661.5" x2="980.5" y2="661.5"/>
<line class="wc" x1="863.5" y1="671.5" x2="922.5" y2="671.5"/>
<line class="wc" x1="893.5" y1="649.5" x2="893.5" y2="671.5"/>
<line class="wc" x1="907.5" y1="649.5" x2="907.5" y2="671.5"/>
<line class="wc" x1="870.5" y1="661.5" x2="870.5" y2="671.5"/>
<line class="wc" x1="878.5" y1="661.5" x2="878.5" y2="671.5"/>
<line class="wc" x1="886.5" y1="661.5" x2="886.5" y2="671.5"/>
<line class="wc" x1="922.5" y1="637.5" x2="980.5" y2="637.5"/>
<text class="tr" x="770" y="648.3" style="font-size:5.2px" textLength="41" lengthAdjust="spacingAndGlyphs">标记处数分　区</text>
<rect class="rf" x="813" y="645" width="17" height="3"/>
<text class="tr" x="771.8" y="656.3" style="font-size:5.4px">设计</text>
<rect class="rf" x="816.5" y="652" width="14.5" height="5"/>
<text class="tr" x="771.3" y="672.7" style="font-size:5.4px">审核</text>
<text class="tr" x="771.3" y="680.5" style="font-size:5.4px">工艺</text>
<text class="tr" x="867" y="658" style="font-size:5.2px">阶段标记</text>
<text class="tr" x="895" y="658" style="font-size:5.2px">重量</text>
<text class="tr" x="909" y="658" style="font-size:5.2px">比例</text>
<text class="trb" x="909.5" y="668.8" style="font-size:6.6px">1:1</text>
<text class="tr" x="867" y="680" style="font-size:6.2px" textLength="50" lengthAdjust="spacing">共 7 张  第 7 张</text>
<text class="trbi" x="951.5" y="627.5" style="font-size:5.8px" text-anchor="middle">黑龙江工程学院</text>
<text class="trbi" x="951.5" y="635.5" style="font-size:5.8px" text-anchor="middle">汽车工程系</text>
<text class="trbi" x="951" y="648.8" style="font-size:10.6px" textLength="48" lengthAdjust="spacingAndGlyphs" text-anchor="middle">摆臂式中间</text>
<text class="trbi" x="951" y="660.3" style="font-size:10.6px" textLength="19" lengthAdjust="spacingAndGlyphs" text-anchor="middle">支承</text>
<text class="tri" x="951.5" y="674.2" style="font-size:6.8px" text-anchor="middle" textLength="32" lengthAdjust="spacingAndGlyphs">ZJZ10-04</text>
<polygon points="285.5,151.5 289.1,150.6 289.1,152.4" style="fill:#fff;stroke:none"/>
<polygon points="383.5,151.5 379.9,152.4 379.9,150.6" style="fill:#fff;stroke:none"/>
<polygon points="302.5,192.5 306.1,191.6 306.1,193.4" style="fill:#fff;stroke:none"/>
<polygon points="365.5,192.5 361.9,193.4 361.9,191.6" style="fill:#fff;stroke:none"/>
<polygon points="255.5,432.5 259.1,431.6 259.1,433.4" style="fill:#fff;stroke:none"/>
<polygon points="413.5,432.5 409.9,433.4 409.9,431.6" style="fill:#fff;stroke:none"/>
<polygon points="438.5,186.5 439.4,190.1 437.6,190.1" style="fill:#fff;stroke:none"/>
<polygon points="438.5,265.5 437.6,261.9 439.4,261.9" style="fill:#fff;stroke:none"/>
<polygon points="438.5,265.5 439.4,269.1 437.6,269.1" style="fill:#fff;stroke:none"/>
<polygon points="438.5,359.5 437.6,355.9 439.4,355.9" style="fill:#fff;stroke:none"/>
<polygon points="563.5,140.5 567.1,139.6 567.1,141.4" style="fill:#fff;stroke:none"/>
<polygon points="595.5,140.5 591.9,141.4 591.9,139.6" style="fill:#fff;stroke:none"/>
<polygon points="578.5,440.5 582.1,439.6 582.1,441.4" style="fill:#fff;stroke:none"/>
<polygon points="625.5,440.5 621.9,441.4 621.9,439.6" style="fill:#fff;stroke:none"/>
</svg>
</body></html>
